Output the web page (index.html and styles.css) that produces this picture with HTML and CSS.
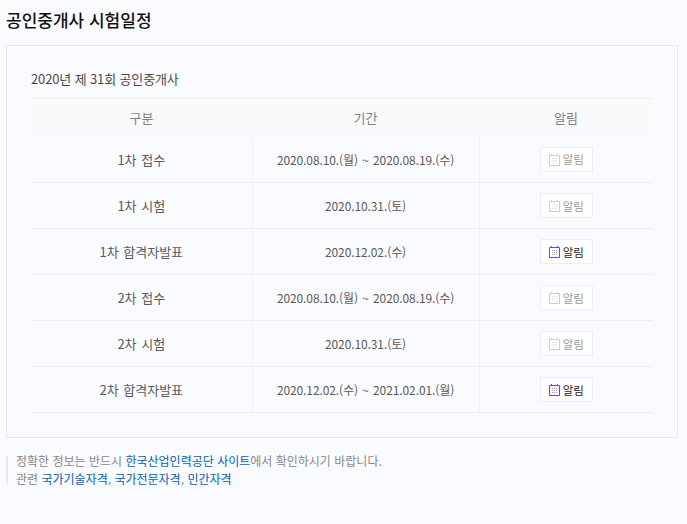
FILE: index.html
```html
<!DOCTYPE html>
<html lang="ko">
<head>
    <meta charset="UTF-8">
    <title>공인중개사 시험일정</title>
    <link rel="stylesheet" href="styles.css">
</head>
<body>
    <h2 class="page-title">공인중개사 시험일정</h2>

    <div class="schedule-box">
        <p class="exam-name">2020년 제 31회 공인중개사</p>
        <table class="schedule">
            <thead>
                <tr>
                    <th class="col-type">구분</th>
                    <th class="col-date">기간</th>
                    <th class="col-alarm">알림</th>
                </tr>
            </thead>
            <tbody>
                <tr>
                    <td>1차 접수</td>
                    <td class="date">2020.08.10.(월) ~ 2020.08.19.(수)</td>
                    <td><span class="alarm-btn off"><svg class="cal" viewBox="0 0 11 12"><use href="#cal"></use></svg>알림</span></td>
                </tr>
                <tr>
                    <td>1차 시험</td>
                    <td class="date">2020.10.31.(토)</td>
                    <td><span class="alarm-btn off"><svg class="cal" viewBox="0 0 11 12"><use href="#cal"></use></svg>알림</span></td>
                </tr>
                <tr>
                    <td>1차 합격자발표</td>
                    <td class="date">2020.12.02.(수)</td>
                    <td><span class="alarm-btn on"><svg class="cal" viewBox="0 0 11 12"><use href="#cal"></use></svg>알림</span></td>
                </tr>
                <tr>
                    <td>2차 접수</td>
                    <td class="date">2020.08.10.(월) ~ 2020.08.19.(수)</td>
                    <td><span class="alarm-btn off"><svg class="cal" viewBox="0 0 11 12"><use href="#cal"></use></svg>알림</span></td>
                </tr>
                <tr>
                    <td>2차 시험</td>
                    <td class="date">2020.10.31.(토)</td>
                    <td><span class="alarm-btn off"><svg class="cal" viewBox="0 0 11 12"><use href="#cal"></use></svg>알림</span></td>
                </tr>
                <tr>
                    <td>2차 합격자발표</td>
                    <td class="date">2020.12.02.(수) ~ 2021.02.01.(월)</td>
                    <td><span class="alarm-btn on"><svg class="cal" viewBox="0 0 11 12"><use href="#cal"></use></svg>알림</span></td>
                </tr>
            </tbody>
        </table>
    </div>

    <div class="notice">
        <p>정확한 정보는 반드시 <a href="#">한국산업인력공단 사이트</a>에서 확인하시기 바랍니다.</p>
        <p>관련 <a href="#">국가기술자격</a>, <a href="#">국가전문자격</a>, <a href="#">민간자격</a></p>
    </div>

    <svg class="icon-defs" width="0" height="0">
        <symbol id="cal" viewBox="0 0 11 12">
            <path d="M.5 1.500h10v10H.5zM2.500 0v1M8.500 0v1" fill="none" stroke="currentColor"/>
            <path d="M3 4h1v1H3zM5 4h1v1H5zM7 4h1v1H7zM3 6h1v1H3zM5 6h1v1H5zM7 6h1v1H7zM3 8h1v1H3zM5 8h1v1H5zM7 8h1v1H7z" fill="currentColor" opacity=".6"/>
        </symbol>
    </svg>
</body>
</html>
```

FILE: styles.css
```css
* {
    margin: 0;
    padding: 0;
    box-sizing: border-box;
}

body {
    font-family: "Noto Sans CJK KR", "Noto Sans", sans-serif;
    font-size: 13px;
    background: #fafbfe;
    color: #5a5a5a;
    padding: 0 9px 0 6px;
}

.page-title {
    font-size: 17px;
    font-weight: 500;
    color: #111;
    height: 45px;
    line-height: 40px;
}

.schedule-box {
    border: 1px solid #e6e8ee;
    padding: 24px;
    height: 393px;
}

.exam-name {
    height: 28px;
    line-height: 18px;
    letter-spacing: -.13px;
    color: #4a4a4a;
}

.schedule {
    width: 622px;
    border-collapse: collapse;
    table-layout: fixed;
    border-top: 1px solid #eceef2;
}

.schedule th {
    height: 38px;
    font-weight: 400;
    color: #808080;
    background: #f9fafc;
}

.col-type { width: 221px; }
.col-date { width: 227px; }

.schedule td {
    height: 46px;
    text-align: center;
    border-bottom: 1px solid #eceef2;
    border-left: 1px solid #f0f1f5;
    word-spacing: 1px;
}

.schedule td:first-child {
    border-left: 0;
}

.schedule td.date {
    font-size: 12px;
    letter-spacing: -.1px;
    word-spacing: 1px;
}

.alarm-btn {
    display: inline-flex;
    align-items: center;
    justify-content: center;
    width: 53px;
    height: 25px;
    border: 1px solid #eceef2;
    background: #fff;
    font-size: 11.500px;
}

.alarm-btn.off {
    color: #999;
}

.alarm-btn.on {
    color: #222;
}

.cal {
    width: 11px;
    height: 12px;
    margin-right: 3px;
    margin-top: 1px;
}

.off .cal {
    color: #cccccc;
}

.on .cal {
    color: #7044e0;
}

.notice {
    margin-top: 14px;
    background: linear-gradient(#e8e9ee, #e8e9ee) no-repeat 0 4px / 2px 28px;
    padding-left: 10px;
    color: #888;
    line-height: 18px;
    font-size: 12px;
}

.notice a {
    color: #0064b4;
    text-decoration: none;
}

.icon-defs {
    position: absolute;
}
```
